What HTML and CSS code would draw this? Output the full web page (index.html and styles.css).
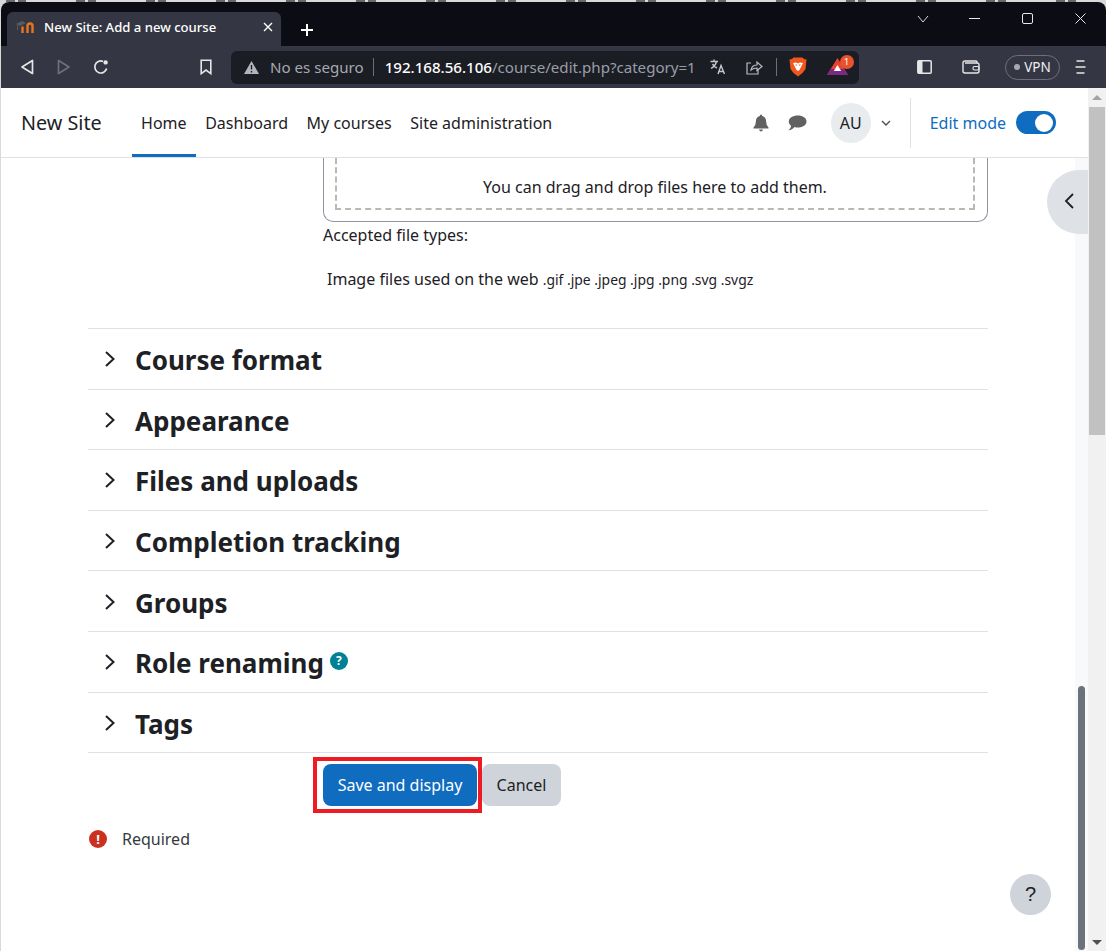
FILE: index.html
```html
<!DOCTYPE html>
<html lang="en">
<head>
  <meta charset="UTF-8" />
  <title>New Site: Add a new course</title>
  <link rel="stylesheet" href="styles.css">
</head>
<body>
  <div class="behind"></div>

  <div class="window">
    <div class="titlebar">
      <div class="tab">
        <svg class="favicon" width="18" height="14" viewBox="0 0 18 14">
          <path d="M0 4 L6 1 L10 3 L4 6 Z" fill="#5a5a5a"/>
          <path d="M1.5 5 V10" stroke="#5a5a5a" fill="none"/>
          <path d="M6.5 13 V6.5 M11.5 13 V6 Q11.5 3.5 14 3.5 Q16.5 3.5 16.5 6 V13" stroke="#e8751f" stroke-width="2.4" fill="none"/>
        </svg>
        <span class="tab-title">New Site: Add a new course</span>
        <svg class="tab-close" width="10" height="10" viewBox="0 0 10 10"><path d="M1 1 L9 9 M9 1 L1 9" stroke="#fff" stroke-width="1.4"/></svg>
      </div>
      <svg class="new-tab" width="14" height="14" viewBox="0 0 14 14"><path d="M7 1 V13 M1 7 H13" stroke="#fff" stroke-width="2"/></svg>
      <div class="win-controls">
        <svg class="win-chevron" width="12" height="8" viewBox="0 0 12 8"><path d="M1 1 L6 7 L11 1" stroke="#d8d8d8" fill="none"/></svg>
        <svg width="11" height="11" viewBox="0 0 11 11"><path d="M0 5.5 H11" stroke="#e8e8e8"/></svg>
        <svg width="11" height="11" viewBox="0 0 11 11"><rect x=".5" y=".5" width="10" height="10" rx="1.5" stroke="#e8e8e8" fill="none"/></svg>
        <svg width="11" height="11" viewBox="0 0 11 11"><path d="M.5 .5 L10.5 10.5 M10.5 .5 L.5 10.5" stroke="#e8e8e8"/></svg>
      </div>
    </div>

    <div class="toolbar">
      <div class="nav-btns">
        <svg width="14" height="16" viewBox="0 0 14 16"><path d="M12.5 1.5 V14.5 L2 8 Z" stroke="#e6e6e6" stroke-width="1.7" fill="none" stroke-linejoin="round"/></svg>
        <svg width="14" height="16" viewBox="0 0 14 16"><path d="M1.5 1.5 V14.5 L12 8 Z" stroke="#6d707b" stroke-width="1.7" fill="none" stroke-linejoin="round"/></svg>
        <svg width="16" height="16" viewBox="0 0 16 16"><path d="M13.6 9.5 A6 6 0 1 1 10 2.4" stroke="#e6e6e6" stroke-width="1.7" fill="none"/><circle cx="12.6" cy="3.4" r="2.2" fill="#e6e6e6"/></svg>
      </div>
      <svg class="bookmark" width="12" height="16" viewBox="0 0 12 16"><path d="M1.2 1.2 H10.8 V14.6 L6 11 L1.2 14.6 Z" stroke="#e6e6e6" stroke-width="1.6" fill="none"/></svg>
      <div class="address">
        <svg class="warn" width="15" height="13" viewBox="0 0 15 13"><path d="M7.5 0 L15 13 H0 Z" fill="#b2b5bc"/><path d="M7.5 4 V8.5 M7.5 10 V11.5" stroke="#1c1e26" stroke-width="1.4"/></svg>
        <span class="not-secure">No es seguro</span>
        <span class="addr-sep"></span>
        <span class="url"><b>192.168.56.106</b>/course/edit.php?category=1</span>
        <svg class="addr-icon translate" width="16" height="16" viewBox="0 0 16 16"><path d="M0.5 2.5 H8 M4 0.5 V2.5 M6.5 2.5 Q5.5 7 1 9.5 M2.5 5 Q4.5 8 7 9 M8 15 L11 6.5 L14.5 15 M9 12.5 H13.5" stroke="#c4c7cd" stroke-width="1.4" fill="none"/></svg>
        <svg class="addr-icon share" width="17" height="16" viewBox="0 0 17 16"><path d="M5 4 H1 V15 H12 V11 M5 11 Q6 6 11 6 V3 L16 7.5 L11 11.5 V9 Q7.5 9 5 11 Z" stroke="#b9bcc3" stroke-width="1.2" fill="none"/></svg>
        <span class="addr-sep small"></span>
        <svg class="brave" width="18" height="20" viewBox="0 0 18 20"><path d="M4.5 0.5 H13.5 L15 2 L17.5 2.5 L16.5 12 Q14 16.5 9 19.5 Q4 16.5 1.5 12 L0.5 2.5 L3 2 Z" fill="#f1571d"/><path d="M4 6 L7 5.5 L9 6.5 L11 5.5 L14 6 L12 10 L10.5 13 L9 14 L7.5 13 L6 10 Z" fill="#fff"/><path d="M6.5 8 H8 M10 8 H11.5" stroke="#f1571d" stroke-width="1.2"/></svg>
        <div class="bat">
          <svg width="21" height="18" viewBox="0 0 20 18" preserveAspectRatio="none"><path d="M10 0 L20 17 H0 Z" fill="#e8432e"/><path d="M0 17 L3.5 11 H16.5 L20 17 Z" fill="#7a2a83"/><path d="M10 7 L13.5 13 H6.5 Z" fill="#fff"/></svg>
          <span class="bat-badge">1</span>
        </div>
      </div>
      <div class="tool-right">
        <svg class="panel-icon" width="15" height="14" viewBox="0 0 15 14"><rect x=".8" y=".8" width="13.4" height="12.4" rx="1" stroke="#e6e6e6" stroke-width="1.5" fill="none"/><rect x="1" y="1" width="4.5" height="12" fill="#e6e6e6"/></svg>
        <svg class="wallet-icon" width="18" height="14" viewBox="0 0 18 14"><path d="M15 3 V2 Q15 1 14 1 H3 Q1 1 1 3 V11 Q1 13 3 13 H15 Q17 13 17 11 V5 Q17 3 15 3 H3" stroke="#e6e6e6" stroke-width="1.4" fill="none"/><rect x="11" y="6.5" width="6" height="3.5" rx="1.5" stroke="#e6e6e6" stroke-width="1.2" fill="none"/></svg>
        <div class="vpn"><span class="vpn-dot"></span>VPN</div>
        <svg class="menu-icon" width="11" height="14" viewBox="0 0 11 14"><path d="M1.5 1 H9.5 M0.5 7 H10.5 M1.5 13 H9.5" stroke="#e6e6e6" stroke-width="1.5"/></svg>
      </div>
    </div>

    <div class="viewport">
      <div class="page">
        <nav class="navbar">
          <a class="brand">New Site</a>
          <ul class="primary-nav">
            <li class="active">Home</li>
            <li>Dashboard</li>
            <li>My courses</li>
            <li>Site administration</li>
          </ul>
          <div class="user-nav">
            <svg width="16" height="18" viewBox="0 0 16 18"><path d="M8 0.5 Q9.2 0.5 9.2 2 Q13.2 3 13.2 8 Q13.2 11.5 15.5 13.5 V14.5 H0.5 V13.5 Q2.8 11.5 2.8 8 Q2.8 3 6.8 2 Q6.8 .5 8 .5 Z M6 15.5 H10 Q9.5 17.5 8 17.5 Q6.5 17.5 6 15.5 Z" fill="#616161"/></svg>
            <svg class="msg-icon" width="19" height="16" viewBox="0 0 19 16"><path d="M9.8 0.5 C14.8 0.5 18.5 3 18.5 6.5 C18.5 10 14.8 12.5 9.8 12.5 C8.5 12.5 7.5 12.4 6.5 12 C5 14 3 15 0.5 15.2 C2 14 3 12.5 3 10.8 C1.5 9.5 .8 8 .8 6.5 C.8 3 4.8 .5 9.8 .5 Z" fill="#616161"/></svg>
            <span class="avatar">AU</span>
            <svg class="caret" width="10" height="6" viewBox="0 0 10 6"><path d="M1 1 L5 5 L9 1" stroke="#495057" stroke-width="1.4" fill="none"/></svg>
            <span class="nav-divider"></span>
            <span class="edit-label">Edit mode</span>
            <span class="switch"><span class="knob"></span></span>
          </div>
        </nav>

        <div class="content-wrap">
          <main class="content">
            <div class="form-upload">
              <div class="filemanager">
                <div class="dropzone">You can drag and drop files here to add them.</div>
              </div>
              <p class="accepted">Accepted file types:</p>
              <p class="types">Image files used on the web <small>.gif .jpe .jpeg .jpg .png .svg .svgz</small></p>
            </div>

            <section class="sections">
              <div class="section"><svg class="chev" width="12" height="18" viewBox="0 0 12 18"><path d="M2 2 L9.5 9 L2 16" stroke="#1d2125" stroke-width="2" fill="none"/></svg><h3>Course format</h3></div>
              <div class="section"><svg class="chev" width="12" height="18" viewBox="0 0 12 18"><path d="M2 2 L9.5 9 L2 16" stroke="#1d2125" stroke-width="2" fill="none"/></svg><h3>Appearance</h3></div>
              <div class="section"><svg class="chev" width="12" height="18" viewBox="0 0 12 18"><path d="M2 2 L9.5 9 L2 16" stroke="#1d2125" stroke-width="2" fill="none"/></svg><h3>Files and uploads</h3></div>
              <div class="section"><svg class="chev" width="12" height="18" viewBox="0 0 12 18"><path d="M2 2 L9.5 9 L2 16" stroke="#1d2125" stroke-width="2" fill="none"/></svg><h3>Completion tracking</h3></div>
              <div class="section"><svg class="chev" width="12" height="18" viewBox="0 0 12 18"><path d="M2 2 L9.5 9 L2 16" stroke="#1d2125" stroke-width="2" fill="none"/></svg><h3>Groups</h3></div>
              <div class="section"><svg class="chev" width="12" height="18" viewBox="0 0 12 18"><path d="M2 2 L9.5 9 L2 16" stroke="#1d2125" stroke-width="2" fill="none"/></svg><h3>Role renaming</h3><span class="help-dot">?</span></div>
              <div class="section"><svg class="chev" width="12" height="18" viewBox="0 0 12 18"><path d="M2 2 L9.5 9 L2 16" stroke="#1d2125" stroke-width="2" fill="none"/></svg><h3>Tags</h3></div>
            </section>

            <div class="actions">
              <div class="highlight"><button class="btn-primary">Save and display</button></div>
              <button class="btn-secondary">Cancel</button>
            </div>

            <div class="required"><span class="req-icon">!</span>Required</div>
          </main>
          <div class="inner-scroll"><div class="inner-thumb"></div></div>
          <button class="drawer-toggle"><svg width="10" height="16" viewBox="0 0 10 16"><path d="M9 1 L2 8 L9 15" stroke="#1d2125" stroke-width="1.8" fill="none"/></svg></button>
          <button class="help-btn">?</button>
        </div>
      </div>

      <div class="outer-scroll">
        <span class="arrow-up"></span>
        <div class="outer-thumb"></div>
        <span class="arrow-down"></span>
      </div>
    </div>
  </div>
</body>
</html>
```

FILE: styles.css
```css
* {
  box-sizing: border-box;
}
html, body {
  margin: 0;
  height: 951px;
  overflow: hidden;
}
body {
  font-family: "Noto Sans", Arial, sans-serif;
  font-size: 16px;
  color: #1d2125;
  background-color: #d9d9d9;
  position: relative;
}

/* window behind the browser, only a sliver of it shows */
.behind {
  position: absolute;
  top: 0;
  left: 6px;
  right: 0;
  height: 2px;
  background: repeating-linear-gradient(90deg, #6a6a6a 0 9px, transparent 9px 12px, #6a6a6a 12px 20px, transparent 20px 70px);
}
.window {
  position: relative;
  margin: 2px 0 0 1px;
  height: 949px;
  display: flex;
  flex-direction: column;
  border-radius: 8px 8px 0 0;
  overflow: hidden;
  background-color: #fff;
}

/* title bar */
.titlebar {
  height: 44px;
  flex: none;
  background-color: #0b0c14;
  display: flex;
  align-items: flex-end;
  padding-left: 6px;
}
.tab {
  width: 274px;
  height: 34px;
  background-color: #343743;
  border-radius: 6px 6px 0 0;
  display: flex;
  align-items: center;
  padding: 0 0 4px 9px;
  color: #fff;
}
.favicon {
  flex: none;
}
.tab-title {
  font-size: 13.1px;
  font-weight: 500;
  margin-left: 10px;
  flex: 1;
  white-space: nowrap;
}
.tab-close {
  margin-right: 8px;
}
.new-tab {
  margin: 0 0 9px 19px;
}
.win-controls {
  margin-left: auto;
  align-self: flex-start;
  display: flex;
  align-items: center;
  gap: 42px;
  padding: 11px 20px 0 0;
}
.win-chevron {
  margin-right: -2px;
}

/* toolbar */
.toolbar {
  height: 42px;
  flex: none;
  background-color: #343743;
  display: flex;
  align-items: center;
  color: #e6e6e6;
}
.nav-btns {
  display: flex;
  align-items: center;
  gap: 22.5px;
  margin-left: 19px;
  width: 180px;
}
.bookmark {
  margin-right: 19px;
}
.address {
  width: 628px;
  height: 33px;
  background-color: #1b1d25;
  border-radius: 6px;
  display: flex;
  align-items: center;
  padding-left: 13px;
  font-size: 15.1px;
  white-space: nowrap;
}
.not-secure {
  margin-left: 11px;
  color: #a6a9b0;
}
.addr-sep {
  width: 1px;
  height: 18px;
  background-color: #6d707b;
  margin: 0 11px 0 9px;
}
.addr-sep.small {
  margin: 0 12px 0 13px;
}
.url {
  color: #9a9da5;
  width: 325px;
  overflow: hidden;
}
.url b {
  color: #fff;
  font-weight: 500;
}
.addr-icon.share {
  margin-left: 20px;
}
.brave {
  flex: none;
}
.bat {
  position: relative;
  margin-left: 20px;
  height: 18px;
}
.bat-badge {
  position: absolute;
  top: -3px;
  right: -6px;
  width: 14px;
  height: 14px;
  border-radius: 50%;
  background-color: #e8532e;
  color: #fff;
  font-size: 9px;
  text-align: center;
  line-height: 14px;
}
.tool-right {
  display: flex;
  align-items: center;
  margin-left: 58px;
}
.wallet-icon {
  margin-left: 30px;
}
.vpn {
  width: 55px;
  height: 25px;
  border: 1px solid #6d707b;
  border-radius: 13px;
  display: flex;
  align-items: center;
  justify-content: center;
  font-size: 13.5px;
  gap: 4px;
  margin-left: 25px;
  color: #f0f0f0;
}
.vpn-dot {
  width: 6px;
  height: 6px;
  border-radius: 50%;
  background-color: #a6a9b0;
}
.menu-icon {
  margin-left: 15px;
}

/* page area */
.viewport {
  flex: 1;
  display: flex;
  min-height: 0;
}
.page {
  flex: 1;
  display: flex;
  flex-direction: column;
  min-width: 0;
}
.outer-scroll {
  width: 18px;
  flex: none;
  background-color: #f1f1f1;
  position: relative;
  padding: 19px 1px 0;
}
.outer-thumb {
  height: 328px;
  background-color: #c1c1c1;
}
.arrow-up, .arrow-down {
  position: absolute;
  left: 4px;
  border-left: 5px solid transparent;
  border-right: 5px solid transparent;
}
.arrow-up {
  top: 7px;
  border-bottom: 5px solid #a3a3a3;
}
.arrow-down {
  bottom: 6px;
  border-top: 5px solid #505050;
}

/* moodle navbar */
.navbar {
  height: 70px;
  flex: none;
  border-bottom: 1px solid #dee2e6;
  display: flex;
  align-items: stretch;
  padding-left: 20px;
}
.brand {
  font-size: 19.8px;
  align-self: center;
  margin-right: 30px;
  margin-top: -1px;
}
.primary-nav {
  list-style: none;
  display: flex;
  margin: 0;
  padding: 0;
}
.primary-nav li {
  padding: 0 9.3px;
  line-height: 70px;
  height: 69px;
}
.primary-nav li.active {
  border-bottom: 3px solid #0f6cbf;
}
.user-nav {
  margin-left: auto;
  display: flex;
  align-items: center;
  padding-right: 32px;
}
.msg-icon {
  margin-left: 19px;
}
.avatar {
  width: 40px;
  height: 40px;
  border-radius: 50%;
  background-color: #e9ecef;
  margin-left: 24px;
  display: flex;
  align-items: center;
  justify-content: center;
}
.caret {
  margin-left: 10px;
}
.nav-divider {
  width: 1px;
  height: 50px;
  background-color: #dee2e6;
  margin: 0 19px 0 19px;
}
.edit-label {
  color: #0f6cbf;
}
.switch {
  width: 40px;
  height: 23px;
  border-radius: 12px;
  background-color: #0f6cbf;
  margin-left: 10px;
  display: flex;
  align-items: center;
  justify-content: flex-end;
  padding-right: 3px;
}
.knob {
  width: 18px;
  height: 18px;
  border-radius: 50%;
  background-color: #fff;
}
.content-wrap {
  flex: 1;
  display: flex;
  position: relative;
  min-height: 0;
}
.content {
  flex: 1;
  padding-left: 87px;
  min-width: 0;
}
.inner-scroll {
  width: 13px;
  flex: none;
  background-color: #f8f9fa;
  padding: 528px 3px 0;
}
.inner-thumb {
  height: 264px;
  border-radius: 4px;
  background-color: #6a737b;
}

/* upload field */
.form-upload {
  padding-left: 235px;
  width: 900px;
  height: 170px;
}
.filemanager {
  height: 64px;
  border: 1px solid #8f959e;
  border-top: 0;
  border-radius: 0 0 10px 10px;
  padding: 0 12px 12px 11px;
}
.dropzone {
  height: 52px;
  border: 2px dashed #b8b8b8;
  border-top: 0;
  text-align: center;
  padding-top: 17px;
  line-height: 24px;
}
.accepted {
  margin: 1px 0 0;
  line-height: 24px;
}
.types {
  margin: 20px 0 0 4px;
  line-height: 24px;
}
.types small {
  font-size: 13.9px;
}

/* collapsed sections */
.sections {
  width: 900px;
  border-top: 1px solid #dee2e6;
}
.section {
  height: 60.6px;
  border-bottom: 1px solid #dee2e6;
  display: flex;
  align-items: center;
  padding: 4px 0 0 16px;
}
.section h3 {
  font-size: 26px;
  font-weight: 700;
  margin: 0 0 0 19px;
  line-height: 1.2;
}
.chev {
  margin-top: -3px;
}
.help-dot {
  width: 18px;
  height: 18px;
  border-radius: 50%;
  background-color: #008196;
  color: #fff;
  font-size: 12px;
  font-weight: 700;
  text-align: center;
  line-height: 18px;
  margin: -5px 0 0 6px;
}

/* buttons */
.actions {
  display: flex;
  align-items: center;
  padding: 4px 0 0 225px;
}
.highlight {
  border: 4px solid #ed1c24;
  padding: 3px 1px 3px 6px;
}
.btn-primary, .btn-secondary {
  font: inherit;
  border: 0;
  border-radius: 8px;
  height: 42px;
}
.btn-primary {
  width: 154px;
  background-color: #0f6cbf;
  color: #fff;
}
.btn-secondary {
  width: 79px;
  background-color: #ced4da;
  color: #1d2125;
}
.required {
  display: flex;
  align-items: center;
  margin: 15px 0 0 1px;
  font-size: 16px;
  color: #343a40;
}
.req-icon {
  width: 18px;
  height: 18px;
  border-radius: 50%;
  background-color: #ca3120;
  color: #fff;
  font-size: 13px;
  font-weight: 700;
  text-align: center;
  line-height: 18px;
  margin-right: 15px;
}

/* floating buttons */
.drawer-toggle {
  position: absolute;
  top: 12px;
  right: 0;
  width: 41px;
  height: 64px;
  border: 0;
  padding: 0 0 0 17px;
  border-radius: 32px 0 0 32px;
  background-color: #dee2e6;
  text-align: left;
}
.help-btn {
  position: absolute;
  left: 1009px;
  top: 716px;
  width: 41px;
  height: 41px;
  border: 0;
  border-radius: 50%;
  background-color: #ced4da;
  color: #1d2125;
  font: 20px "Liberation Sans", Arial, sans-serif;
}
```
